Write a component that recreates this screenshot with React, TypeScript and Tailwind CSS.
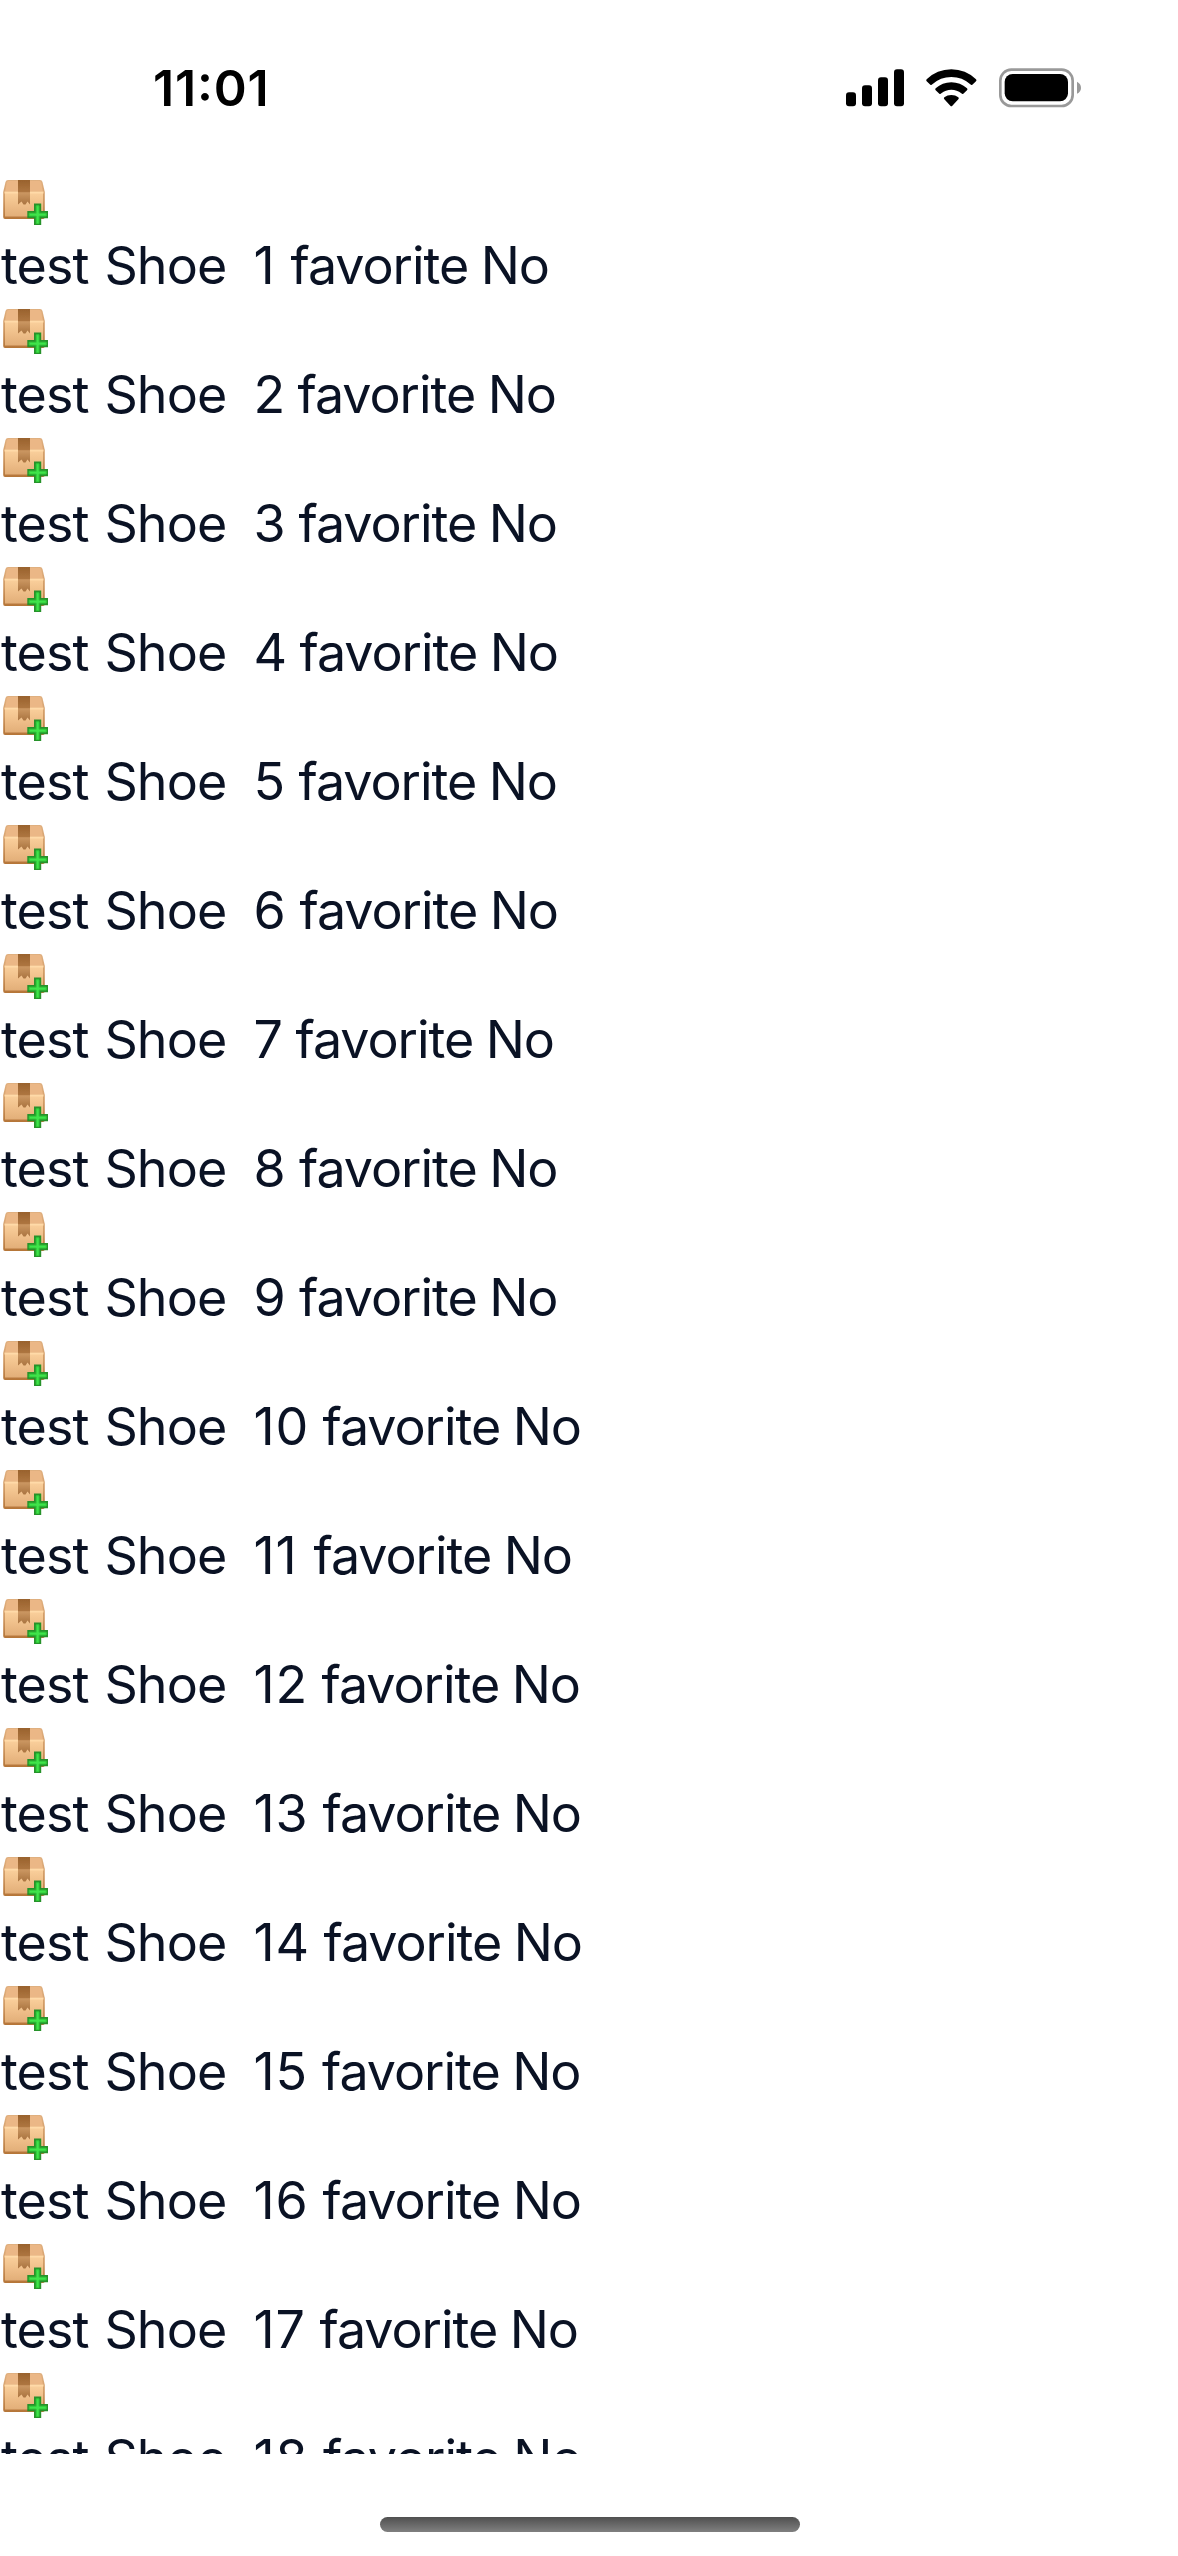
// Each entry pairs a shoe number with the advance of its column in pixels.
const shoes: [number, number][] = [
  [1, 37],
  [2, 44],
  [3, 45],
  [4, 46],
  [5, 45],
  [6, 46],
  [7, 42],
  [8, 45.5],
  [9, 45.5],
  [10, 69],
  [11, 60],
  [12, 68],
  [13, 69],
  [14, 70],
  [15, 68.5],
  [16, 69],
  [17, 66],
  [18, 69.5],
];

function PackageIcon() {
  return (
    <svg viewBox="0 0 48 48" className="block size-12">
      <defs>
        <linearGradient id="front" x1="0" y1="0" x2="0" y2="1">
          <stop offset="0" stopColor="#fad09c" />
          <stop offset="0.5" stopColor="#efbf8a" />
          <stop offset="1" stopColor="#e2ae78" />
        </linearGradient>
        <linearGradient id="edge" x1="0" y1="0" x2="0" y2="1">
          <stop offset="0" stopColor="#e0b080" />
          <stop offset="0.5" stopColor="#d09a64" />
          <stop offset="1" stopColor="#b57538" />
        </linearGradient>
        <linearGradient id="tape" x1="0" y1="0" x2="0" y2="1">
          <stop offset="0" stopColor="#99622d" />
          <stop offset="0.48" stopColor="#ad7540" />
          <stop offset="0.52" stopColor="#cb9762" />
          <stop offset="1" stopColor="#aa7440" />
        </linearGradient>
        <filter id="soft" x="-5%" y="-5%" width="110%" height="110%">
          <feGaussianBlur stdDeviation="0.65" />
        </filter>
      </defs>
      <g filter="url(#soft)">
        <path d="M8 3H40Q42 3 42.500 5L44.800 15V40Q44.800 42 43 42H5Q3.200 42 3.200 40V15L5.500 5Q6 3 8 3Z" fill="url(#edge)" />
        <path d="M8.500 4H39.500Q40.800 4 41.200 5.500L43 14.500H5L6.800 5.500Q7.200 4 8.500 4Z" fill="#ebb786" />
        <path d="M5 15.500H43V39.500H5Z" fill="url(#front)" />
        <path d="M4.500 15.500H43.500" stroke="#ffdaa8" strokeWidth="2" />
        <path d="M18 3H30V27.500L27.500 24.500L25.500 27.500H23.500L21.500 24.500L18 27.500Z" fill="url(#tape)" />
        <path d="M34 26.500H41.200V34H48V41.200H41.200V48H34V41.200H27.300V34H34Z" fill="#27922b" />
        <path d="M36.200 28.800H39V36.200H46.200V39H39V46.500H36.200V39H29.200V36.200H36.200Z" fill="#3fe34b" stroke="#30cc3a" strokeWidth="1" />
      </g>
    </svg>
  );
}

function StatusIcons() {
  return (
    <svg viewBox="78 50 708 126" className="block h-[42px] w-[236px]">
      <rect x="78" y="126" width="30" height="42" rx="9" />
      <rect x="126" y="105" width="30" height="63" rx="9" />
      <rect x="174" y="81" width="30" height="87" rx="9" />
      <rect x="222" y="57" width="30" height="111" rx="9" />
      <path d="M320 87Q317 90 320 93L331 103Q334 105 337 102Q361 80 394 80Q427 80 451 102Q454 105 457 103L468 93Q471 90 468 87Q437 57 394 57Q351 57 320 87Z" />
      <path d="M347 114Q344 117 347 120L358 130Q361 132 364 129Q377 118 394 118Q411 118 424 129Q427 132 430 130L441 120Q444 117 441 114Q421 96 394 96Q367 96 347 114Z" />
      <path d="M373 141Q370 144 373 147L391 166Q394 169 397 166L415 147Q418 144 415 141Q406 134 394 134Q382 134 373 141Z" />
      <rect x="541" y="58" width="217" height="109" rx="33" fill="none" stroke="#999" strokeWidth="8" />
      <rect x="554" y="71" width="190" height="82" rx="24" />
      <path d="M771 94Q783 100 783 112Q783 124 771 130Z" fill="#999" />
    </svg>
  );
}

export default function App() {
  return (
    <div className="flex h-[2556px] w-[1178px] flex-col overflow-hidden bg-white font-['Inter',sans-serif]">
      <header className="flex h-[177px] shrink-0 items-start justify-between pr-[96px] pl-[153px]">
        <time className="mt-[57px] text-[50px] leading-[62px] font-semibold tracking-[0.8px] text-black [font-feature-settings:'calt'_1]">
          11:01
        </time>
        <div className="mt-[66.67px]">
          <StatusIcons />
        </div>
      </header>
      <main className="h-[2277px] shrink-0 overflow-hidden">
        {shoes.map(([n, advance]) => (
          <div key={n} className="h-[129px]">
            <PackageIcon />
            <p className="flex h-[81px] pl-px text-[52px] leading-[81px] whitespace-pre text-[#0a1224]">
              <span className="w-[252.5px] shrink-0 tracking-[-0.9px] [word-spacing:2px]">{"test Shoe  "}</span>
              <span className="shrink-0 tracking-[0.8px]" style={{ width: advance }}>
                {`${n} `}
              </span>
              <span className="tracking-[-1.05px] [word-spacing:-1px]">favorite No</span>
            </p>
          </div>
        ))}
      </main>
      <footer className="flex justify-center pt-[63px] pl-[2px]">
        <div className="h-[15px] w-[420px] rounded-full bg-linear-to-b from-[#505050] to-[#808080]" />
      </footer>
    </div>
  );
}
